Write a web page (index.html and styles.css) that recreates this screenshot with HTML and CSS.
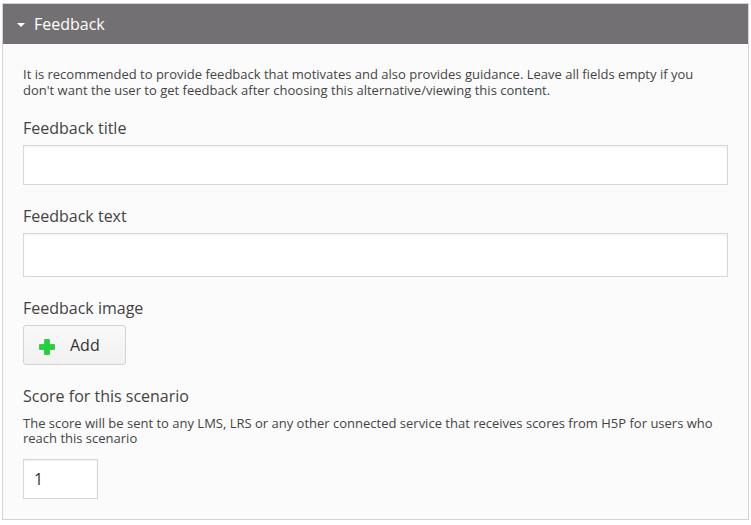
FILE: index.html
```html
<!DOCTYPE html>
<html>
<head>
<meta charset="utf-8">
<link rel="stylesheet" href="styles.css">
</head>
<body>
<div class="group">
  <div class="group-title">
    <span class="caret"></span>
    <span class="title-text">Feedback</span>
  </div>
  <div class="content">
    <p class="desc intro">It is recommended to provide feedback that motivates and also provides guidance. Leave all fields empty if you don't want the user to get feedback after choosing this alternative/viewing this content.</p>
    <div class="field">
      <label class="label">Feedback title</label>
      <div class="input text-input"></div>
    </div>
    <div class="field">
      <label class="label">Feedback text</label>
      <div class="input text-area"></div>
    </div>
    <div class="field">
      <label class="label">Feedback image</label>
      <button class="add-btn">
        <svg class="plus" width="18" height="18" viewBox="0 0 18 18"><path d="M6.5 1.5h5v5h5v5h-5v5h-5v-5h-5v-5h5z" fill="#1fd23c" stroke="#17b52f" stroke-width="0.6"/></svg>
        <span>Add</span>
      </button>
    </div>
    <div class="field">
      <label class="label">Score for this scenario</label>
      <p class="desc score-desc">The score will be sent to any LMS, LRS or any other connected service that receives scores from H5P for users who reach this scenario</p>
      <div class="input number-input">1</div>
    </div>
  </div>
</div>
</body>
</html>
```
FILE: styles.css
```css
html, body {
  margin: 0;
  padding: 0;
  background: #ffffff;
}
body {
  padding: 3px 2px 0 2px;
  font-family: "Open Sans", "DejaVu Sans", sans-serif;
  color: #434343;
}
.group {
  border: 1px solid #d4d4d4;
  background: #fbfbfb;
}
.group-title {
  background: #737073;
  height: 40px;
  display: flex;
  align-items: center;
  padding-left: 14px;
  color: #ffffff;
  font-size: 16px;
}
.caret {
  width: 0;
  height: 0;
  border-left: 4.5px solid transparent;
  border-right: 4.5px solid transparent;
  border-top: 4.5px solid #ffffff;
  margin-right: 9px;
  margin-top: 1px;
}
.content {
  padding: 22px 20px 20px 20px;
}
.desc {
  margin: 0;
  font-size: 13px;
  line-height: 16px;
  color: #444;
}
.intro {
  margin-bottom: 19px;
  padding-right: 20px;
}
.field {
  margin-bottom: 20px;
}
.field:last-child {
  margin-bottom: 0;
}
.label {
  display: block;
  font-size: 16px;
  line-height: 22px;
  color: #434343;
  margin-bottom: 6px;
}
.input {
  box-sizing: border-box;
  background: #ffffff;
  border: 1px solid #d7d7d7;
  box-shadow: inset 0 1px 2px rgba(0,0,0,0.06);
}
.text-input {
  height: 40px;
}
.text-area {
  height: 44px;
}
.add-btn {
  box-sizing: border-box;
  display: flex;
  align-items: center;
  height: 40px;
  width: 103px;
  padding: 0 0 0 14px;
  border: 1px solid #d3d3d3;
  border-radius: 3px;
  background: linear-gradient(#f9f9f9, #f1f1f1);
  font-family: "Open Sans", "DejaVu Sans", sans-serif;
  font-size: 16px;
  color: #333;
}
.plus {
  margin-right: 14px;
  margin-top: 3px;
}
.score-desc {
  line-height: 15px;
  margin-top: 9px;
  margin-bottom: 13px;
}
.number-input {
  width: 75px;
  height: 40px;
  font-size: 16px;
  line-height: 38px;
  padding-left: 10px;
  color: #333;
}
```
